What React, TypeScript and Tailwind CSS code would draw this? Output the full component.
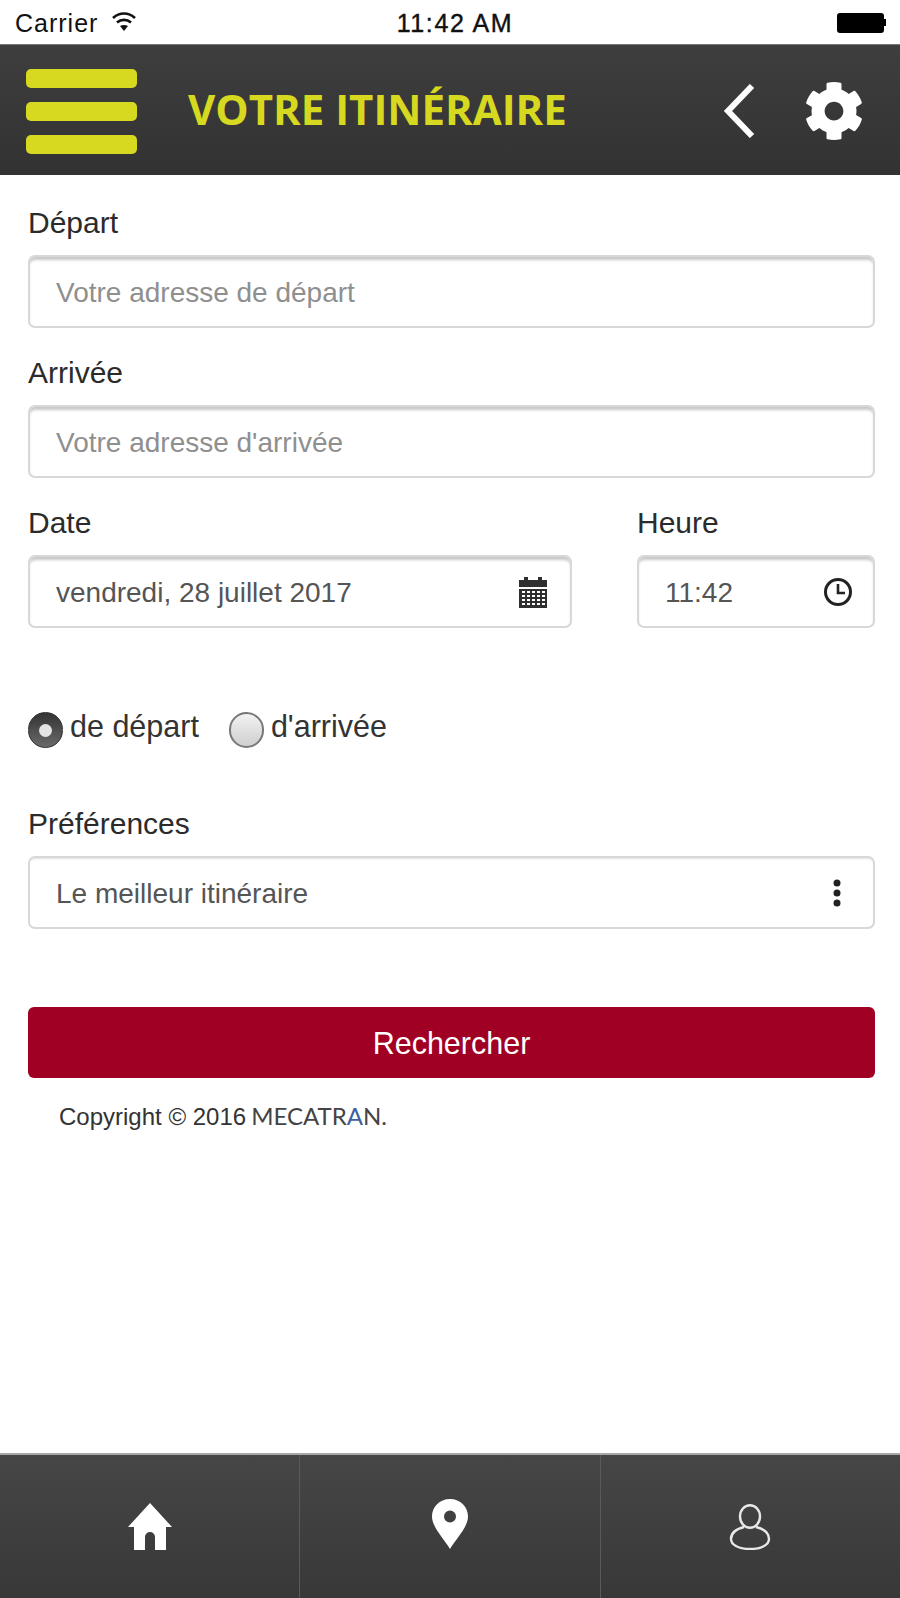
import { FaCog } from "react-icons/fa";

const FieldLabel = ({ children }: { children: string }) => (
  <div className="h-[36px] text-[30px] leading-[36px] text-[#2b2b2b]">{children}</div>
);

const Box = ({ children, soft }: { children: React.ReactNode; soft?: boolean }) => (
  <div
    className={`flex items-center justify-between h-[73px] pl-[26px] pt-[2px] rounded-[7px] border-2 border-[#d8d8d8] bg-white text-[28px] text-[#555555] ${
      soft ? "shadow-[inset_0_2px_2px_-1px_rgba(0,0,0,0.12)]" : "shadow-[inset_0_4px_3px_-1px_rgba(0,0,0,0.22)]"
    }`}
  >
    {children}
  </div>
);

const CalendarIcon = () => (
  <svg width="30" height="34" viewBox="0 0 30 34" className="mr-[22px] mb-[2px]" fill="#2f2f2f">
    <path d="M1 5h5V2h4v3h10V2h4v3h5v7H1z" />
    <path fillRule="evenodd" d="M1 14h28v19H1zM4 16v2h3v-2zM9 16v2h3v-2zM14 16v2h3v-2zM19 16v2h3v-2zM24 16v2h3v-2zM4 20v2h3v-2zM9 20v2h3v-2zM14 20v2h3v-2zM19 20v2h3v-2zM24 20v2h3v-2zM4 24v2h3v-2zM9 24v2h3v-2zM14 24v2h3v-2zM19 24v2h3v-2zM24 24v2h3v-2zM4 28v2h3v-2zM9 28v2h3v-2zM14 28v2h3v-2zM19 28v2h3v-2zM24 28v2h3v-2z" />
  </svg>
);

const ClockIcon = () => (
  <svg width="30" height="30" viewBox="0 0 30 30" className="mr-[20px] mb-[2px]" fill="none" stroke="#222222" strokeWidth="3">
    <circle cx="15" cy="15" r="12.5" />
    <path d="M15 7v9h7" strokeWidth="2.6" />
  </svg>
);

const Radio = ({ on }: { on?: boolean }) =>
  on ? (
    <span className="mt-[4px] shrink-0 flex items-center justify-center w-[35px] h-[36px] rounded-full border border-[#2e2e2e] bg-[linear-gradient(#333333,#6a6a6a)]">
      <span className="w-[13px] h-[13px] rounded-full bg-[#e4e4e4]" />
    </span>
  ) : (
    <span className="mt-[4px] shrink-0 block w-[35px] h-[36px] rounded-full border-2 border-[#777777] bg-[linear-gradient(#f2f2f2,#cfcfcf)]" />
  );

const FooterCell = ({ children, last }: { children: React.ReactNode; last?: boolean }) => (
  <div className={`flex-1 flex items-center justify-center pb-[6px] ${last ? "" : "border-r border-[#5a5a5a]"}`}>
    {children}
  </div>
);

export default function App() {
  return (
    <div className="w-[900px] h-[1598px] flex flex-col bg-white font-['Liberation_Sans',sans-serif]">
      {/* status bar */}
      <div className="h-[44px] flex items-center justify-between pl-[15px] pr-[14px] pt-[4px] text-[25px] text-[#111111] bg-white">
        <div className="flex flex-1 items-center gap-[13px]">
          <span className="tracking-[1px]">Carrier</span>
          <svg width="26" height="22" viewBox="0 0 26 22" fill="none" stroke="#111111" strokeWidth="2.6" className="mb-[5px]">
            <path d="M2 7c6.500-6 15.500-6 22 0" />
            <path d="M6 11.500c4-3.500 10-3.500 14 0" />
            <path d="M13 20l-4-5c2.500-1.500 5.500-1.500 8 0z" fill="#111111" stroke="none" />
          </svg>
        </div>
        <span className="ml-[9px] tracking-[1.600px] [-webkit-text-stroke:0.4px_#111111]">11:42 AM</span>
        <div className="flex flex-1 items-center justify-end pb-[3px]">
          <span className="w-[47px] h-[20px] rounded-[3px] bg-black" />
          <span className="w-[2px] h-[7px] bg-black" />
        </div>
      </div>

      {/* header */}
      <header className="h-[131px] flex items-center bg-[linear-gradient(#3e3e3e,#323232)] border-t border-[#777777] pl-[26px] pr-[36px]">
        <div className="flex flex-col gap-[14px] w-[111px] mt-[2px]">
          <span className="h-[19px] rounded-[5px] bg-[#d6d91f]" />
          <span className="h-[19px] rounded-[5px] bg-[#d6d91f]" />
          <span className="h-[19px] rounded-[5px] bg-[#d6d91f]" />
        </div>
        <h1 className="ml-[51px] mb-[4px] flex-1 text-[42px] font-bold text-[#d6d91f] font-['Open_Sans',sans-serif]">VOTRE ITINÉRAIRE</h1>
        <svg width="32" height="54" viewBox="0 0 32 54" fill="none" stroke="white" strokeWidth="6" className="mr-[49px] ml-[1px] mt-[2px]">
          <path d="M29 2L5 27l24 25" />
        </svg>
        <FaCog className="w-[60px] h-[60px] text-white mt-[2px]" />
      </header>

      {/* form */}
      <main className="flex-1 pl-[28px] pr-[25px] pt-[30px]">
        <FieldLabel>Départ</FieldLabel>
        <div className="mt-[14px]">
          <Box><span className="text-[#8f8f8f]">Votre adresse de départ</span></Box>
        </div>

        <div className="mt-[27px]"><FieldLabel>Arrivée</FieldLabel></div>
        <div className="mt-[14px]">
          <Box><span className="text-[#8f8f8f]">Votre adresse d'arrivée</span></Box>
        </div>

        <div className="mt-[27px] flex gap-[65px]">
          <div className="w-[544px]">
            <FieldLabel>Date</FieldLabel>
            <div className="mt-[14px]">
              <Box>
                <span>vendredi, 28 juillet 2017</span>
                <CalendarIcon />
              </Box>
            </div>
          </div>
          <div className="flex-1">
            <FieldLabel>Heure</FieldLabel>
            <div className="mt-[14px]">
              <Box>
                <span>11:42</span>
                <ClockIcon />
              </Box>
            </div>
          </div>
        </div>

        <div className="mt-[82px] flex items-center text-[30.500px] text-[#333333] h-[36px]">
          <Radio on />
          <span className="ml-[7px] mb-[3px]">de départ</span>
          <span className="ml-[30px]"><Radio /></span>
          <span className="ml-[7px] mb-[3px]">d'arrivée</span>
        </div>

        <div className="mt-[60px]"><FieldLabel>Préférences</FieldLabel></div>
        <div className="mt-[14px]">
          <Box soft>
            <span>Le meilleur itinéraire</span>
            <svg width="10" height="28" viewBox="0 0 10 28" fill="#222222" className="mr-[31px] mb-[2px]">
              <circle cx="5" cy="4" r="3.500" />
              <circle cx="5" cy="14" r="3.500" />
              <circle cx="5" cy="24" r="3.500" />
            </svg>
          </Box>
        </div>

        <button className="mt-[78px] w-full h-[71px] pt-[3px] rounded-[6px] bg-[#a00024] text-white text-[30.500px]">Rechercher</button>

        <div className="mt-[20px] pl-[31px] flex items-baseline text-[24px] text-[#333333]">
          <span>Copyright © 2016</span>
          <span className="ml-[5px] text-[24px] font-normal text-[#444444] font-['Lato',sans-serif]">
            MECATR<span className="text-[#3f5f9f]">A</span>N.
          </span>
        </div>
      </main>

      {/* tab bar */}
      <footer className="h-[145px] flex border-t-2 border-[#a8a8a8] bg-[linear-gradient(#464646,#383838)]">
        <FooterCell>
          <svg width="44" height="47" viewBox="0 0 44 47" fill="white" className="mt-[5px]">
            <path d="M22 0L44 24h-6v23H27V34a5 5 0 0 0-10 0v13H6V24H0z" />
          </svg>
        </FooterCell>
        <FooterCell>
          <svg width="38" height="50" viewBox="0 0 38 50" fill="white">
            <path fillRule="evenodd" d="M19 0c10.500 0 18 8 18 17.500C37 28 25 40 19 50 13 40 1 28 1 17.500 1 8 8.500 0 19 0zm0 11.500a6 6 0 1 0 0 12 6 6 0 0 0 0-12z" />
          </svg>
        </FooterCell>
        <FooterCell last>
          <svg width="42" height="46" viewBox="0 0 42 46" fill="none" stroke="#e8e8e8" strokeWidth="2.400" className="mt-[6px]">
            <ellipse cx="21" cy="12.500" rx="10" ry="11.300" />
            <path d="M15 23C7 25 2 29 2 35c0 6 8 10 19 10s19-4 19-10c0-6-5-10-13-12" />
          </svg>
        </FooterCell>
      </footer>
    </div>
  );
}
